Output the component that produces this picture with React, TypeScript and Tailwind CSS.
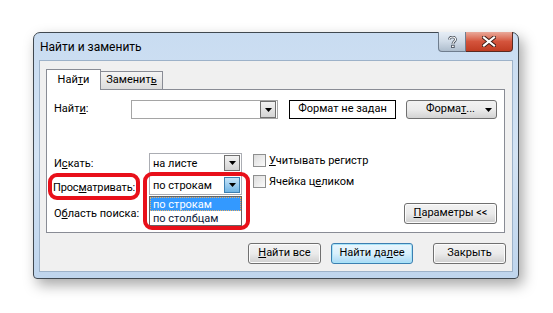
import React from "react";

function DropArrow({ className = "" }: { className?: string }) {
  return (
    <svg width="7" height="4" viewBox="0 0 7 4" className={className}>
      <path d="M0 0h7L3.5 4z" fill="currentColor" />
    </svg>
  );
}

function Combo({ value, width, active }: { value: string; width: string; active?: boolean }) {
  return (
    <div className={`flex h-[20px] items-center border border-[#abadb3] bg-white pl-[3px] pr-px ${width}`}>
      <span className="flex-1 leading-none">{value}</span>
      <div
        className={
          active
            ? "flex h-[16px] w-[16px] items-center justify-center border border-[#3c7fb1] bg-linear-to-b from-[#c6e4f8] to-[#6fb4e4] text-black"
            : "flex h-[16px] w-[16px] items-center justify-center border border-[#707070] bg-linear-to-b from-[#f2f2f2] to-[#d4d4d4] text-black"
        }
      >
        <DropArrow />
      </div>
    </div>
  );
}

function Check({ children }: { children: React.ReactNode }) {
  return (
    <div className="flex items-center gap-[3px]">
      <span className="h-[13px] w-[13px] border border-[#8e8f8f] bg-linear-to-br from-[#dcdcdc] to-[#fbfbfb]" />
      <span className="leading-none">{children}</span>
    </div>
  );
}

function Button({ children, width, primary }: { children: React.ReactNode; width: string; primary?: boolean }) {
  return (
    <div
      className={
        primary
          ? `flex h-[21px] items-center justify-center rounded-[3px] border border-[#3c7fb1] bg-linear-to-b from-[#eaf6fd] via-[#d9f0fc] to-[#a7d9f5] shadow-[inset_0_0_0_1px_#a8e4f8] ${width}`
          : `flex h-[21px] items-center justify-center rounded-[3px] border border-[#707070] bg-linear-to-b from-[#f2f2f2] via-[#ebebeb] to-[#cfcfcf] shadow-[inset_0_0_0_1px_#fcfcfc] ${width}`
      }
    >
      {children}
    </div>
  );
}

export default function App() {
  return (
    <div className="relative h-[313px] w-[553px] overflow-hidden bg-white pl-[33px] pt-[32px] font-['Roboto',sans-serif] text-[11px] text-black">
      <div className="flex h-[247px] w-[486px] flex-col rounded-t-[7px] rounded-b-[4px] border border-[#404850] bg-linear-to-b from-[#c9dcf1] via-[#d3e3f4] to-[#bfd5ed] shadow-[4px_6px_14px_rgba(0,0,0,0.35)]">
        {/* title bar */}
        <div className="flex h-[27px] items-start justify-between">
          <span className="ml-[6px] mt-[6px] text-[12px] leading-[16px]">Найти и заменить</span>
          <div className="-mt-px mr-[5px] flex h-[20px]">
            <div className="flex w-[28px] items-center justify-center rounded-bl-[4px] border border-t-0 border-[#6f7d8e] bg-linear-to-b from-[#e7eef6] via-[#d0dbe7] to-[#aebdcd]">
              <svg width="9" height="12" viewBox="0 0 9 12">
                <path d="M1.5 3.5C1.5 1.8 2.8 1 4.5 1S7.5 2 7.5 3.5c0 1.8-2.5 2-2.5 4V8" fill="none" stroke="#3b4450" strokeWidth="2.6" />
                <path d="M1.5 3.5C1.5 1.8 2.8 1 4.5 1S7.5 2 7.5 3.5c0 1.8-2.5 2-2.5 4V8" fill="none" stroke="#fff" strokeWidth="1.2" />
                <rect x="3.6" y="9.2" width="2.6" height="2.4" fill="#fff" stroke="#3b4450" strokeWidth="0.8" />
              </svg>
            </div>
            <div className="flex w-[47px] items-center justify-center rounded-br-[4px] border border-l-0 border-t-0 border-[#5a2a22] bg-linear-to-b from-[#e9a99a] via-[#d4543c] to-[#c03c22]">
              <svg width="14" height="11" viewBox="0 0 14 11">
                <path d="M2 1.5l10 8M12 1.5l-10 8" stroke="#3a1c16" strokeWidth="4" strokeLinecap="square" />
                <path d="M2 1.5l10 8M12 1.5l-10 8" stroke="#fff" strokeWidth="2.2" strokeLinecap="square" />
              </svg>
            </div>
          </div>
        </div>

        {/* client area */}
        <div className="ml-[5px] flex h-[212px] w-[474px] flex-col border border-[#9db2c9] bg-[#f0f0f0]">
          <div className="ml-[6px] mt-[8px] flex h-[20px] items-end">
            <div className="relative z-10 -mb-px flex h-[21px] w-[55px] items-center justify-center border border-b-0 border-[#898c95] bg-white">
              <span>
                Най<u>т</u>и
              </span>
            </div>
            <div className="flex h-[18px] w-[62px] items-center justify-center border border-b-0 border-l-0 border-[#898c95] bg-linear-to-b from-[#f4f4f4] to-[#dcdcdc]">
              <span>
                Заменит<u>ь</u>
              </span>
            </div>
          </div>

          <div className="ml-[6px] flex h-[144px] w-[459px] flex-col border border-[#898c95] bg-white pl-[6px] pr-[7px]">
            <div className="mt-[10px] flex h-[19px] items-center">
              <span className="w-[78px] pl-px">
                Найт<u>и</u>:
              </span>
              <div className="flex h-[19px] w-[147px] items-center justify-end border border-[#a5a5a5] bg-white p-px">
                <div className="flex h-[17px] w-[16px] items-center justify-center border border-[#707070] bg-linear-to-b from-[#f2f2f2] to-[#d4d4d4]">
                  <DropArrow />
                </div>
              </div>
              <div className="ml-[11px] flex h-[19px] w-[107px] items-center justify-center border border-black">
                Формат не задан
              </div>
              <div className="ml-[10px] flex h-[19px] w-[91px] items-center rounded-[3px] border border-[#707070] bg-linear-to-b from-[#f2f2f2] via-[#ebebeb] to-[#d3d3d3] pl-[19px] pr-[4px]">
                <span className="flex-1">
                  Форма<u>т</u>...
                </span>
                <DropArrow />
              </div>
            </div>

            <div className="mt-[34px] flex items-start">
              <span className="mt-[3px] w-[96px] pl-px">
                И<u>с</u>кать:
              </span>
              <Combo value="на листе" width="w-[93px]" />
              <div className="ml-[11px] mt-px">
                <Check>
                  <u>У</u>читывать регистр
                </Check>
              </div>
            </div>

            <div className="mt-[2px] flex items-start">
              <span className="mt-[5px] w-[96px] tracking-[-0.15px]">
                Прос<u>м</u>атривать:
              </span>
              <Combo value="по строкам" width="w-[93px]" active />
              <div className="ml-[11px]">
                <Check>
                  Ячейка ц<u>е</u>ликом
                </Check>
              </div>
            </div>

            <div className="mt-[6px] flex h-[21px] items-center justify-between">
              <span className="mt-[3px] pl-px">
                О<u>б</u>ласть поиска:
              </span>
              <Button width="w-[93px]">
                <span>
                  <u>П</u>араметры &lt;&lt;
                </span>
              </Button>
            </div>
          </div>

          <div className="mt-[10px] flex justify-end gap-[10px] pr-[6px]">
            <Button width="w-[73px]">
              <span>
                <u>Н</u>айти все
              </span>
            </Button>
            <Button width="w-[82px]" primary>
              <span>
                Найти да<u>л</u>ее
              </span>
            </Button>
            <Button width="w-[73px] ml-[10px]">Закрыть</Button>
          </div>
        </div>
      </div>

      {/* open dropdown list */}
      <div className="absolute left-[149px] top-[196px] flex w-[93px] flex-col border border-[#646464] bg-white leading-none">
        <div className="flex h-[14px] items-center border border-dotted border-[#f0b060] bg-[#3399ff] pl-[2px] text-white">
          по строкам
        </div>
        <div className="flex h-[14px] items-center pl-[3px] text-[#0c1a3a]">по столбцам</div>
      </div>

      {/* red highlight marks */}
      <div className="absolute left-[48px] top-[173px] h-[27px] w-[92px] rounded-[9px] border-[4px] border-[#e8101a]" />
      <div className="absolute left-[143px] top-[172px] h-[58px] w-[107px] rounded-[9px] border-[4px] border-[#e8101a]" />
    </div>
  );
}
